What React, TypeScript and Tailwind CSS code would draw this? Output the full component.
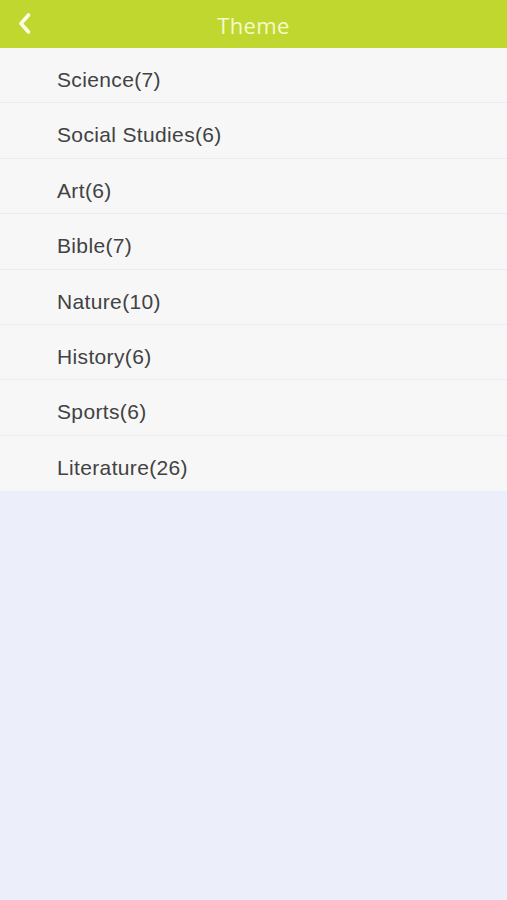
import React from "react";

const items = [
  "Science(7)",
  "Social Studies(6)",
  "Art(6)",
  "Bible(7)",
  "Nature(10)",
  "History(6)",
  "Sports(6)",
  "Literature(26)",
];

export default function App() {
  return (
    <div className="w-[507px] h-[900px] bg-[#eceff9] flex flex-col" style={{ fontFamily: '"Liberation Sans", Arial, sans-serif' }}>
      <div className="relative h-[48px] bg-[#c0d72f] flex items-center justify-center shrink-0">
        <svg className="absolute left-[16px] top-[12px]" width="18" height="23" viewBox="0 0 18 23">
          <path d="M12.5 3 L5 11.5 L12.5 20" fill="none" stroke="#fbfde8" strokeWidth="3.6" strokeLinecap="round" strokeLinejoin="round" />
        </svg>
        <span className="text-[22px] font-medium text-[#f4fbcc] tracking-[0.4px] pt-[3px]" style={{ fontFamily: '"Open Sans", "Noto Sans", sans-serif' }}>Theme</span>
      </div>
      <div className="flex flex-col">
        {items.map((t, i) => (
          <div key={t} className={`h-[55.4px] bg-[#f7f7f8] flex items-center pl-[57px] pt-[9px] text-[21px] tracking-[0.35px] text-[#424242] ${i < items.length - 1 ? "border-b border-[#ececef]" : ""}`}>
            {t}
          </div>
        ))}
      </div>
    </div>
  );
}
